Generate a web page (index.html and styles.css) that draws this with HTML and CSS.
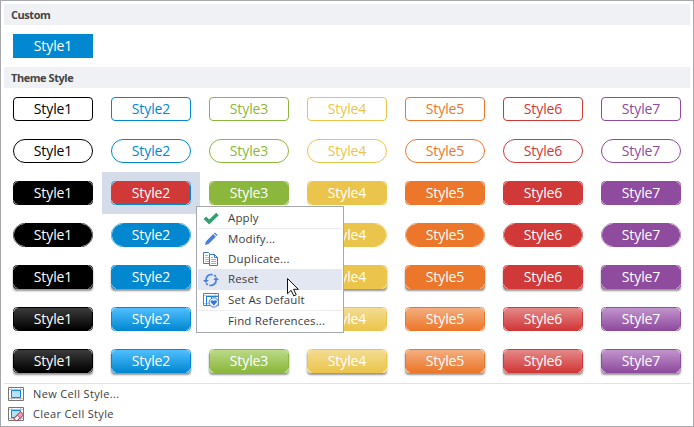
FILE: index.html
```
<!DOCTYPE html>
<html lang="en">
<head>
<meta charset="utf-8">
<title>Cell Styles</title>
<link rel="stylesheet" href="styles.css">
</head>
<body>
<main class="panel">
  <h2 class="heading">Custom</h2>
  <div class="custom"><span class="btn flat">Style1</span></div>
  <h2 class="heading">Theme Style</h2>
  <div class="grid">
    <div class="row outline"><div><span class="btn">Style1</span></div><div><span class="btn">Style2</span></div><div><span class="btn">Style3</span></div><div><span class="btn">Style4</span></div><div><span class="btn">Style5</span></div><div><span class="btn">Style6</span></div><div><span class="btn">Style7</span></div></div>
    <div class="row outline pill"><div><span class="btn">Style1</span></div><div><span class="btn">Style2</span></div><div><span class="btn">Style3</span></div><div><span class="btn">Style4</span></div><div><span class="btn">Style5</span></div><div><span class="btn">Style6</span></div><div><span class="btn">Style7</span></div></div>
    <div class="row fill"><div><span class="btn">Style1</span></div><div class="selected"><span class="btn">Style2</span></div><div><span class="btn">Style3</span></div><div><span class="btn">Style4</span></div><div><span class="btn">Style5</span></div><div><span class="btn">Style6</span></div><div><span class="btn">Style7</span></div></div>
    <div class="row fill pill"><div><span class="btn">Style1</span></div><div><span class="btn">Style2</span></div><div><span class="btn">Style3</span></div><div><span class="btn">Style4</span></div><div><span class="btn">Style5</span></div><div><span class="btn">Style6</span></div><div><span class="btn">Style7</span></div></div>
    <div class="row fill shadow"><div><span class="btn">Style1</span></div><div><span class="btn">Style2</span></div><div><span class="btn">Style3</span></div><div><span class="btn">Style4</span></div><div><span class="btn">Style5</span></div><div><span class="btn">Style6</span></div><div><span class="btn">Style7</span></div></div>
    <div class="row fill shade"><div><span class="btn">Style1</span></div><div><span class="btn">Style2</span></div><div><span class="btn">Style3</span></div><div><span class="btn">Style4</span></div><div><span class="btn">Style5</span></div><div><span class="btn">Style6</span></div><div><span class="btn">Style7</span></div></div>
    <div class="row fill shade shadow"><div><span class="btn">Style1</span></div><div><span class="btn">Style2</span></div><div><span class="btn">Style3</span></div><div><span class="btn">Style4</span></div><div><span class="btn">Style5</span></div><div><span class="btn">Style6</span></div><div><span class="btn">Style7</span></div></div>
  </div>
  <div class="footer">
    <div class="action">
      <svg width="16" height="14" viewBox="0 0 16 14" fill="none"><path d="M.5.5h15v13H.5z" stroke="#777"/><path d="M3.500 1v12M12.500 1v12M1 2.500h14M1 11.500h14" stroke="#c5c5c5"/><path d="M3.500 3.500h9v7h-9z" fill="#b5e2fd" stroke="#1683d8"/></svg>
      <span>New Cell Style...</span>
    </div>
    <div class="action">
      <svg width="16" height="14" viewBox="0 0 16 14" fill="none"><path d="M.5.5h15v13H.5z" stroke="#777"/><path d="M3.500 1v12M12.500 1v12M1 2.500h14M1 11.500h14" stroke="#c5c5c5"/><path d="M3.500 3.500h9v7h-9z" fill="#b5e2fd" stroke="#1683d8"/><path d="M6 11.300l6.600-6.500 2.800 3-5.800 5.700H7.500L6 12z" fill="#fff" stroke="#c34c63" stroke-width="1.200"/><path d="M9.300 8l3.300-3.200 2.800 3-3.100 3.200z" fill="#e8a3ae" stroke="#c34c63"/></svg>
      <span>Clear Cell Style</span>
    </div>
  </div>
</main>

<div class="menu">
  <div class="item">
    <svg width="16" height="16" viewBox="0 0 16 16" fill="none"><path d="M.6 9l2.500-2.600L6.200 9.500l7-6.700 2.500 2.400-9.500 9.300z" fill="#34a071"/></svg>
    <span>Apply</span>
  </div>
  <div class="item split">
    <svg width="16" height="16" viewBox="0 0 16 16"><path d="M2 14l.9-3.600 7.300-7.300 2.700 2.700-7.300 7.300zM10.900 2.400l1-1 2.700 2.700-1 1z" fill="#467ee2"/></svg>
    <span>Modify...</span>
  </div>
  <div class="item">
    <svg width="16" height="16" viewBox="0 0 16 16" fill="#fff" stroke="#3f76dc"><path d="M.5 1.500h5l2 2v9h-7z"/><path d="M2 4.500h3M2 6.500h4M2 8.500h4M2 10.500h4" stroke="#b6b6b6"/><path d="M6.500 3.500h5l3 3v8h-8z"/><path d="M11.500 3.500v3h3" fill="none"/><path d="M8 6.500h2M8 8.500h5M8 10.500h5M8 12.500h5" stroke="#aaa"/></svg>
    <span>Duplicate...</span>
  </div>
  <div class="item active">
    <svg width="16" height="16" viewBox="0 0 16 16" fill="none" stroke="#4780e5" stroke-width="1.700"><path d="M9.700 2.700A5.400 5.400 0 0 0 2.900 8.300M6.300 13.300A5.400 5.400 0 0 0 13.100 7.700M11.300 3.200l1.500 1.300M4.700 12.800l-1.500-1.300"/><path d="M0 8h5.800l-2.900 3zM10.200 8H16l-2.900-3z" fill="#4780e5" stroke="none"/></svg>
    <span>Reset</span>
  </div>
  <div class="item">
    <svg width="16" height="16" viewBox="0 0 16 16" fill="none"><path d="M.5 1.500h15v12H.5z" fill="#fff" stroke="#777"/><path d="M1 3.500h14M1 11.500h14M12.500 2v11" stroke="#c8c8c8"/><path d="M3.500 13V4M3 4.500h12M8.500 5v3" stroke="#1683d8"/><circle cx="10.800" cy="10.500" r="4.700" fill="#e9f2ff" stroke="#4780e5"/><path d="M10.800 13.400L7.800 10.300c-.8-1.500 1.600-2.900 3-1.300 1.400-1.600 3.800-.2 3 1.300z" fill="#3974dc"/></svg>
    <span>Set As Default</span>
  </div>
  <div class="item split">
    <i class="blank"></i>
    <span>Find References...</span>
  </div>
</div>
<svg class="cursor" width="14" height="21" viewBox="0 0 14 21"><path d="M1.500 1.500v15.200l3.600-3.400 2.600 5.600 2.500-1.100-2.600-5.500h4.800z" fill="#fff" stroke="#111"/></svg>
</body>
</html>
```
FILE: styles.css
```
* { box-sizing: border-box; }

body {
  margin: 0;
  width: 694px;
  height: 427px;
  overflow: hidden;
  font-family: "Open Sans", "Noto Sans", sans-serif;
  background: #fff;
}

.panel {
  width: 694px;
  height: 427px;
  padding: 3px;
  border: 1px solid #a7a8ad;
  display: flex;
  flex-direction: column;
}

.heading {
  margin: 0;
  padding-left: 7px;
  width: 686px;
  height: 21px;
  font: 700 11px/21px "Open Sans", sans-serif;
  letter-spacing: -0.45px;
  color: #444;
  background: #f0f1f5;
  flex: none;
}

.custom { height: 42px; padding: 9px; flex: none; --c: #0288d1; }

.btn {
  display: block;
  width: 80px;
  height: 24px;
  border: 1px solid var(--c);
  border-radius: 4px;
  font-size: 14px;
  line-height: 22px;
  text-align: center;
  letter-spacing: -0.1px;
  color: #fff;
}

.flat { border-radius: 0; background: var(--c); }

.row { display: flex; height: 42px; }
.row > div { width: 98px; padding: 9px; }
.row > :nth-child(1) { --c: #000; --top: #3b3b3b; }
.row > :nth-child(2) { --c: #0288d1; --top: #50bfff; }
.row > :nth-child(3) { --c: #8bb83c; --top: #bbda87; }
.row > :nth-child(4) { --c: #ebc54b; --top: #f3dc93; }
.row > :nth-child(5) { --c: #ec772a; --top: #f4ae7f; }
.row > :nth-child(6) { --c: #d13838; --top: #e58888; }
.row > :nth-child(7) { --c: #8f4b9e; --top: #c194cc; }

.outline .btn { color: var(--c); }
.pill .btn { border-radius: 12px; }

.fill .btn { position: relative; background: var(--c); }
.shade .btn { background: linear-gradient(var(--top), var(--c)) padding-box; }
.shadow .btn { box-shadow: 0 2px 2px rgba(0, 0, 0, 0.42); }

.fill .btn::after {
  --r: 5px;
  --g: transparent calc(var(--r) - 1.5px), rgba(255, 255, 255, 0.5) calc(var(--r) - 1px), rgba(255, 255, 255, 0.5) calc(var(--r) - 0.6px), transparent var(--r);
  content: "";
  position: absolute;
  inset: -1px;
  border-radius: inherit;
  background:
    radial-gradient(circle at 100% 100%, var(--g)) 0 0 / var(--r) var(--r) no-repeat,
    radial-gradient(circle at 0 100%, var(--g)) 100% 0 / var(--r) var(--r) no-repeat,
    radial-gradient(circle at 100% 0, var(--g)) 0 100% / var(--r) var(--r) no-repeat,
    radial-gradient(circle at 0 0, var(--g)) 100% 100% / var(--r) var(--r) no-repeat;
}
.pill.fill .btn::after { --r: 12px; }

.row > .selected { background: #d5dce9; }
.fill .selected .btn { background: #d13838 padding-box; }

.footer {
  margin-top: 1px;
  border-top: 1px solid #e1e2e6;
  width: 687px;
  padding: 0 4px;
}
.action {
  display: flex;
  align-items: center;
  height: 20px;
  gap: 9px;
  font-size: 11px;
  line-height: 16px;
  letter-spacing: 0.35px;
  color: #3d3d3d;
  white-space: nowrap;
}
.action svg { flex: none; }

.menu {
  position: absolute;
  left: 196px;
  top: 206px;
  width: 148px;
  height: 127px;
  padding: 1px;
  border: 1px solid #a5a8ae;
  background: #fff;
}
.item {
  display: flex;
  align-items: center;
  height: 20px;
  padding-left: 5px;
  gap: 9px;
  font-size: 11.5px;
  line-height: 16px;
  letter-spacing: 0.15px;
  color: #3d3d3d;
  white-space: nowrap;
}
.item.split { height: 21px; border-top: 1px solid #ebecf0; }
.item.active { height: 21px; background: #e3e7f1; }
.item.active span { padding-bottom: 2px; }
.item svg, .blank { flex: none; width: 16px; height: 16px; }

.cursor { position: absolute; left: 286px; top: 277px; }
```
